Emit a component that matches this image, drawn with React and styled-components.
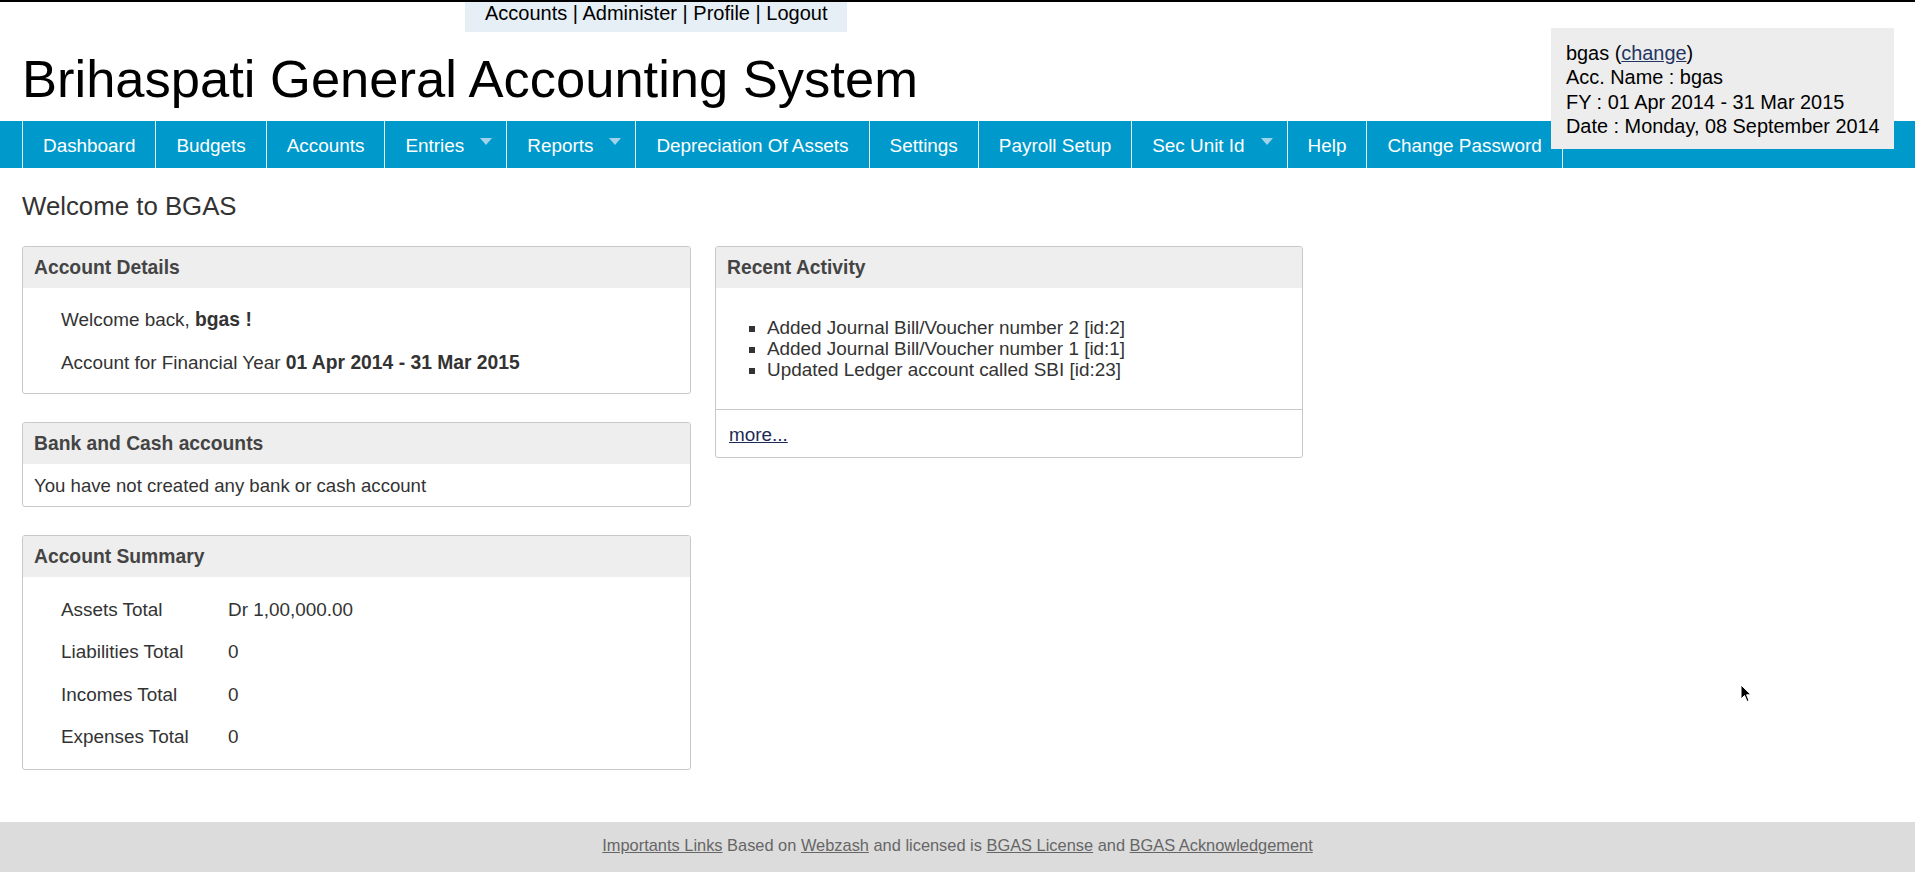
import styled, { createGlobalStyle } from "styled-components";

const GlobalStyle = createGlobalStyle`
  html, body {
    margin: 0;
    padding: 0;
    background: #fff;
  }
  body {
    font-family: "Liberation Sans", Arial, sans-serif;
    color: #333;
  }
  * {
    box-sizing: border-box;
  }
`;

const navItems = [
  { label: "Dashboard" },
  { label: "Budgets" },
  { label: "Accounts" },
  { label: "Entries", drop: true },
  { label: "Reports", drop: true },
  { label: "Depreciation Of Assets" },
  { label: "Settings" },
  { label: "Payroll Setup" },
  { label: "Sec Unit Id", drop: true },
  { label: "Help" },
  { label: "Change Password" },
];

const summary = [
  ["Assets Total", "Dr 1,00,000.00"],
  ["Liabilities Total", "0"],
  ["Incomes Total", "0"],
  ["Expenses Total", "0"],
];

const activity = [
  "Added Journal Bill/Voucher number 2 [id:2]",
  "Added Journal Bill/Voucher number 1 [id:1]",
  "Updated Ledger account called SBI [id:23]",
];

const App = () => {
  return (
    <>
      <GlobalStyle />
      <Page>
        <Header>
          <TopLinks>
            <a href="#">Accounts</a> | <a href="#">Administer</a> |{" "}
            <a href="#">Profile</a> | <a href="#">Logout</a>
          </TopLinks>
          <Title>Brihaspati General Accounting System</Title>
        </Header>

        <InfoBox>
          <div>
            bgas (<InfoLink href="#">change</InfoLink>)
          </div>
          <div>Acc. Name : bgas</div>
          <div>FY : 01 Apr 2014 - 31 Mar 2015</div>
          <div>Date : Monday, 08 September 2014</div>
        </InfoBox>

        <NavBar>
          <NavList>
            {navItems.map((item) => (
              <NavItem key={item.label} $drop={item.drop}>
                {item.label}
                {item.drop && <Caret />}
              </NavItem>
            ))}
          </NavList>
        </NavBar>

        <Main>
          <Heading>Welcome to BGAS</Heading>
          <Columns>
            <LeftColumn>
              <Panel>
                <PanelHeader>Account Details</PanelHeader>
                <DetailsBody>
                  <p>
                    Welcome back, <strong>bgas !</strong>
                  </p>
                  <p>
                    Account for Financial Year{" "}
                    <strong>01 Apr 2014 - 31 Mar 2015</strong>
                  </p>
                </DetailsBody>
              </Panel>

              <Panel>
                <PanelHeader>Bank and Cash accounts</PanelHeader>
                <PlainBody>You have not created any bank or cash account</PlainBody>
              </Panel>

              <Panel>
                <PanelHeader>Account Summary</PanelHeader>
                <SummaryBody>
                  {summary.map(([label, value]) => (
                    <SummaryRow key={label}>
                      <SummaryLabel>{label}</SummaryLabel>
                      <span>{value}</span>
                    </SummaryRow>
                  ))}
                </SummaryBody>
              </Panel>
            </LeftColumn>

            <RightColumn>
              <Panel>
                <PanelHeader>Recent Activity</PanelHeader>
                <ActivityBody>
                  <ActivityList>
                    {activity.map((a) => (
                      <li key={a}>{a}</li>
                    ))}
                  </ActivityList>
                </ActivityBody>
                <PanelFooter>
                  <MoreLink href="#">more...</MoreLink>
                </PanelFooter>
              </Panel>
            </RightColumn>
          </Columns>
        </Main>

        <Footer>
          <FooterLink href="#">Importants Links</FooterLink> Based on{" "}
          <FooterLink href="#">Webzash</FooterLink> and licensed is{" "}
          <FooterLink href="#">BGAS License</FooterLink> and{" "}
          <FooterLink href="#">BGAS Acknowledgement</FooterLink>
        </Footer>

        <Cursor viewBox="0 0 12 19" width="12" height="19">
          <path
            d="M1 1 L1 15 L4.5 11.5 L7 17.5 L9 16.6 L6.6 10.8 L11 10.8 Z"
            fill="#000"
            stroke="#fff"
            strokeWidth="1"
          />
        </Cursor>
      </Page>
    </>
  );
};

const Page = styled.div`
  position: relative;
  min-height: 100vh;
  border-top: 2px solid #000;
  display: flex;
  flex-direction: column;
`;

const Header = styled.header`
  display: flex;
  flex-direction: column;
`;

const TopLinks = styled.div`
  align-self: flex-start;
  margin-left: 465px;
  width: 382px;
  height: 30px;
  padding: 0 20px;
  background: #e5eff5;
  font-size: 20px;
  line-height: 23px;
  color: #000;
  white-space: nowrap;

  a {
    color: #000;
    text-decoration: none;
  }
`;

const Title = styled.h1`
  margin: 17px 0 12px 22px;
  font-size: 52.5px;
  font-weight: normal;
  line-height: 60px;
  color: #000;
`;

const InfoBox = styled.div`
  position: absolute;
  top: 26px;
  left: 1551px;
  width: 343px;
  height: 121px;
  padding: 13px 15px 11px;
  background: #ededed;
  font-size: 19.9px;
  line-height: 24.3px;
  color: #000;
  white-space: nowrap;
  z-index: 2;
`;

const InfoLink = styled.a`
  color: #243563;
  text-decoration: underline;
`;

const NavBar = styled.nav`
  background: #0099cc;
  height: 47px;
`;

const NavList = styled.ul`
  display: flex;
  margin: 0;
  padding: 0 0 0 22px;
  list-style: none;
  height: 100%;
`;

const NavItem = styled.li`
  display: flex;
  align-items: center;
  height: 100%;
  padding: 2px ${({ $drop }) => ($drop ? "14px" : "20px")} 0 20px;
  border-right: 1px solid rgba(255, 255, 255, 0.9);
  color: #fff;
  font-size: 18.9px;
  white-space: nowrap;

  &:first-child {
    border-left: 1px solid rgba(255, 255, 255, 0.9);
  }
`;

const Caret = styled.span`
  display: inline-block;
  margin-left: 16px;
  margin-top: -9px;
  width: 0;
  height: 0;
  border-left: 6px solid transparent;
  border-right: 6px solid transparent;
  border-top: 7px solid #9fd3ea;
`;

const Main = styled.main`
  padding: 0 22px;
`;

const Heading = styled.h2`
  margin: 24px 0 25px;
  font-size: 25.8px;
  font-weight: normal;
  line-height: 29px;
  color: #333;
`;

const Columns = styled.div`
  display: flex;
  align-items: flex-start;
  gap: 24px;
`;

const LeftColumn = styled.div`
  width: 669px;
  display: flex;
  flex-direction: column;
  gap: 28px;
`;

const RightColumn = styled.div`
  width: 588px;
`;

const Panel = styled.section`
  border: 1px solid #c8c8c8;
  border-radius: 3px;
  overflow: hidden;
  font-size: 18.9px;
  line-height: 21px;
  color: #333;

  strong {
    font-size: 19.3px;
  }
`;

const PanelHeader = styled.h3`
  margin: 0;
  padding: 10px 11px;
  background: #eeeeee;
  font-size: 19.3px;
  font-weight: bold;
  line-height: 21px;
  color: #444;
`;

const DetailsBody = styled.div`
  display: flex;
  flex-direction: column;
  gap: 22px;
  padding: 21px 38px 20px;

  p {
    margin: 0;
  }
`;

const PlainBody = styled.div`
  padding: 11px 11px 10px;
  font-size: 18.6px;
`;

const SummaryBody = styled.div`
  padding: 11px 38px 11px;
`;

const SummaryRow = styled.div`
  display: flex;
  align-items: center;
  height: 42.5px;
`;

const SummaryLabel = styled.span`
  width: 167px;
`;

const ActivityBody = styled.div`
  padding: 11px 13px;
`;

const ActivityList = styled.ul`
  margin: 18px 0;
  padding-left: 38px;
  list-style: square;
`;

const PanelFooter = styled.div`
  border-top: 1px solid #c8c8c8;
  padding: 14px 13px 12px;
`;

const MoreLink = styled.a`
  color: #1d2a55;
  text-decoration: underline;
`;

const Footer = styled.footer`
  margin-top: 52px;
  height: 50px;
  padding: 14px 0 0;
  background: #dcdcdc;
  text-align: center;
  font-size: 16.4px;
  line-height: 19px;
  color: #666;
`;

const FooterLink = styled.a`
  color: #666;
  text-decoration: underline;
`;

const Cursor = styled.svg`
  position: absolute;
  left: 1740px;
  top: 682px;
`;

export default App;
